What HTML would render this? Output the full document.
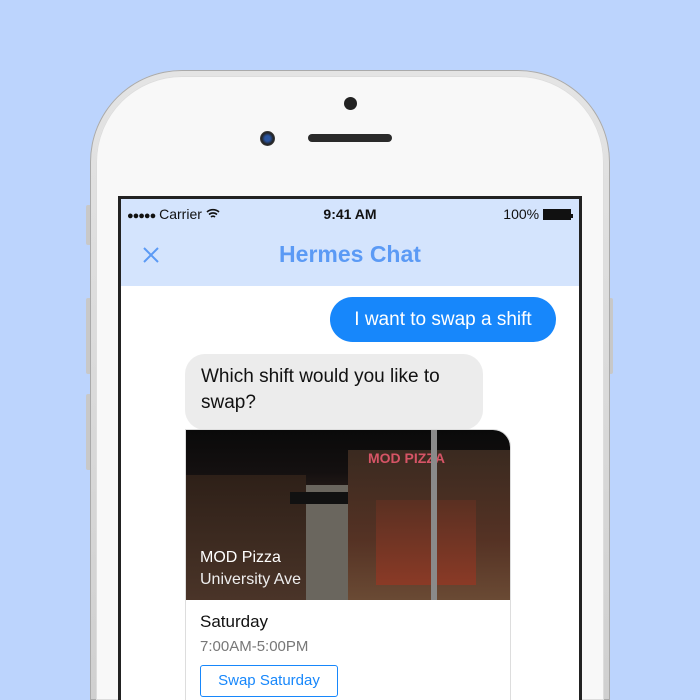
<!DOCTYPE html>
<html style="width:700px;height:700px;overflow:hidden"><head><style>
html,body{margin:0;width:700px;height:700px;overflow:hidden}
body{background:#bcd4fd;position:relative;font-family:"Liberation Sans",sans-serif}
.btn{position:absolute;background:#c8c8c8;border-radius:2px}
.phone{position:absolute;left:90px;top:70px;width:520px;height:630px;border-radius:92px 92px 0 0;background:linear-gradient(#e4e4e4,#d0d0d0);box-shadow:inset 0 0 0 1px #aaa}
.face{position:absolute;left:6px;top:6px;right:6px;bottom:0;border-radius:86px 86px 0 0;background:#f8f8f8;box-shadow:inset 0 0 0 1px #ddd}
.screen{position:absolute;left:118px;top:196px;width:464px;height:504px;background:#222}
.inner{position:absolute;left:3px;top:3px;right:3px;bottom:0;background:#fff;overflow:hidden}
.hdr{height:87px;background:#d4e4fd;position:relative}
.sb{position:absolute;top:7px;font-size:14px;color:#111}
</style></head><body>
<div class="btn" style="left:86px;top:205px;width:6px;height:40px"></div>
<div class="btn" style="left:86px;top:298px;width:6px;height:76px"></div>
<div class="btn" style="left:86px;top:394px;width:6px;height:76px"></div>
<div class="btn" style="left:608px;top:298px;width:5px;height:76px"></div>
<div class="phone"><div class="face"></div></div>
<div style="position:absolute;left:344px;top:97px;width:13px;height:13px;border-radius:50%;background:#222"></div>
<div style="position:absolute;left:260px;top:131px;width:15px;height:15px;border-radius:50%;background:radial-gradient(#2a55a0 25%,#222 55%,#777 100%)"></div>
<div style="position:absolute;left:308px;top:134px;width:84px;height:8px;border-radius:4px;background:#2a2a2a"></div>
<div class="screen"><div class="inner">
<div class="hdr">
<div class="sb" style="left:6px"><span style="font-size:11px;letter-spacing:-1px">●●●●●</span> Carrier <svg width="14" height="11" viewBox="0 0 14 11" style="vertical-align:0"><path d="M1 4a9 9 0 0 1 12 0M3 6.5a6 6 0 0 1 8 0M5 9a3 3 0 0 1 4 0" stroke="#111" stroke-width="1.6" fill="none"/></svg></div>
<div class="sb" style="left:0;right:0;text-align:center;font-weight:bold">9:41 AM</div>
<div class="sb" style="right:6px">100% <span style="display:inline-block;width:26px;height:9px;background:#111;border:1px solid #111;vertical-align:-1px"></span><span style="display:inline-block;width:2px;height:4px;background:#111;vertical-align:1px"></span></div>
<svg style="position:absolute;left:22px;top:48px" width="16" height="16"><path d="M1 1L15 15M15 1L1 15" stroke="#5b9af5" stroke-width="2"/></svg>
<div style="position:absolute;left:0;right:0;top:42px;text-align:center;color:#5b9af5;font-size:23px;font-weight:bold">Hermes Chat</div>
</div>
<div style="position:absolute;left:209px;top:98px;width:226px;height:45px;border-radius:23px;background:#1787fb;color:#fff;font-size:19px;line-height:45px;text-align:center">I want to swap a shift</div>
<div style="position:absolute;left:64px;top:155px;width:298px;height:76px;border-radius:20px;background:#ececec;color:#111;font-size:19px;line-height:26px;padding:10px 16px;box-sizing:border-box">Which shift would you like to swap?</div>
<div style="position:absolute;left:64px;top:230px;width:324px;height:280px;border-radius:0 18px 0 0;border:1px solid #ddd;overflow:hidden;background:#fff">
<div style="height:170px;position:relative;background:linear-gradient(180deg,#0a0a0a 0%,#141010 25%,#3a2820 50%,#4a3222 75%,#6a625a 100%)">
<div style="position:absolute;left:0;top:45px;width:120px;height:125px;background:linear-gradient(#2e2018,#4a3428)"></div>
<div style="position:absolute;left:120px;top:55px;width:42px;height:115px;background:#6a665e"></div>
<div style="position:absolute;left:104px;top:62px;width:60px;height:12px;background:#111"></div>
<div style="position:absolute;left:162px;top:20px;width:162px;height:150px;background:linear-gradient(#3a2a20,#553224 60%,#6a4a34)"></div>
<div style="position:absolute;left:190px;top:70px;width:100px;height:85px;background:linear-gradient(#5a3022,#8a3a26)"></div>
<div style="position:absolute;left:182px;top:20px;color:#d65466;font-weight:bold;font-size:14px">MOD PIZZA</div>
<div style="position:absolute;left:245px;top:0;width:6px;height:170px;background:#8a8a8a"></div>
<div style="position:absolute;left:14px;top:117px;color:#fff;font-size:16px;line-height:22px">MOD Pizza<br><span style="color:#eee">University Ave</span></div>
</div>
<div style="padding:12px 14px">
<div style="font-size:17px;color:#111">Saturday</div>
<div style="font-size:15px;color:#777;margin-top:6px">7:00AM-5:00PM</div>
<div style="margin-top:10px;width:136px;height:30px;border:1px solid #1787fb;border-radius:3px;color:#1787fb;font-size:15px;line-height:30px;text-align:center">Swap Saturday</div>
</div></div>
</div></div>
</body></html>
